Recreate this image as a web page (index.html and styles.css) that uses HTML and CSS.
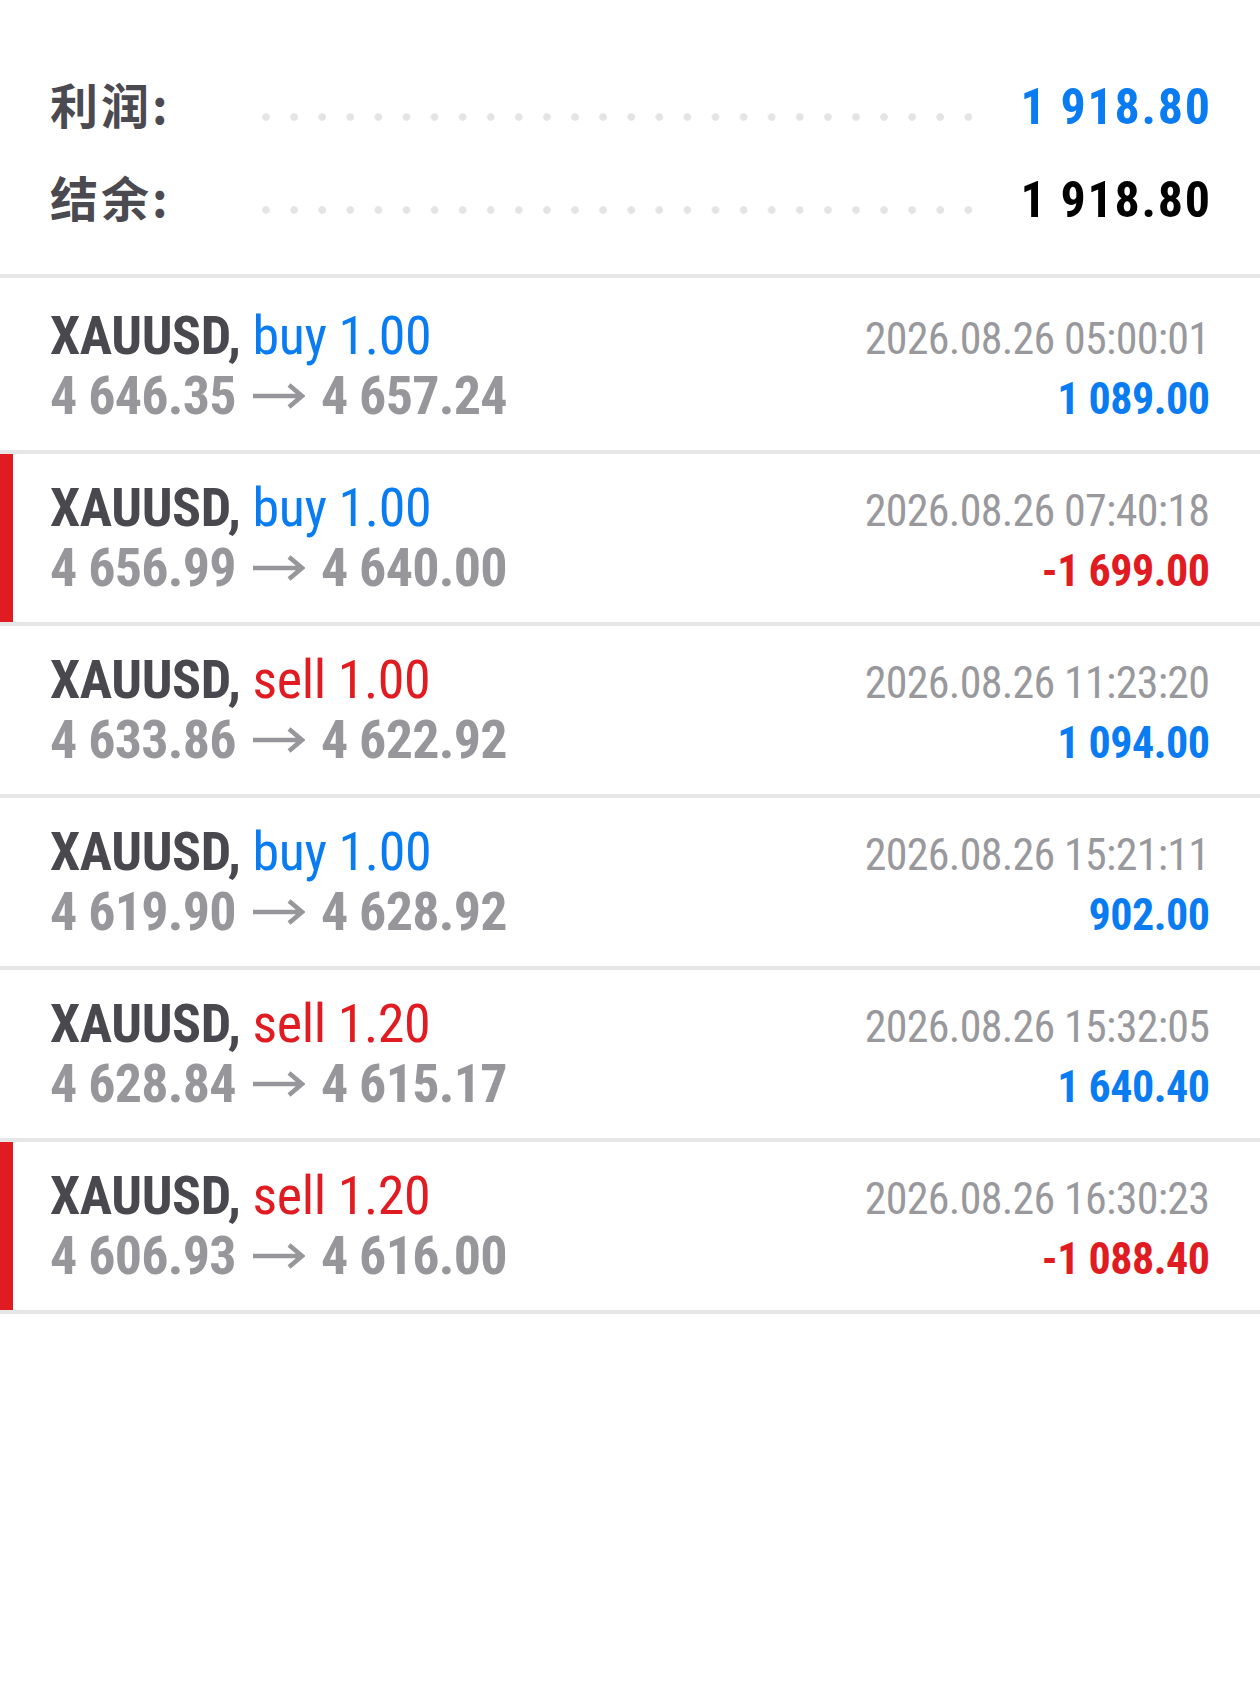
FILE: index.html
```html
<!DOCTYPE html>
<html lang="zh">
<head>
<meta charset="utf-8">
<title>历史</title>
<link rel="stylesheet" href="styles.css">
</head>
<body>
<div class="summary">
  <div class="sum-row">
    <span class="sum-label">利润:</span>
    <span class="dots"></span>
    <span class="sum-value blue">1 918.80</span>
  </div>
  <div class="sum-row">
    <span class="sum-label">结余:</span>
    <span class="dots"></span>
    <span class="sum-value black">1 918.80</span>
  </div>
</div>

<div class="deals">
  <div class="deal">
    <div class="line">
      <span class="title"><b class="sym">XAUUSD,</b> <span class="blue">buy 1.00</span></span>
      <span class="time">2026.08.26 05:00:01</span>
    </div>
    <div class="line">
      <span class="prices">4 646.35<svg class="arrow" viewBox="0 0 52 26"><path d="M0 13H48M36 2L49 13L36 24"/></svg>4 657.24</span>
      <span class="profit blue">1 089.00</span>
    </div>
  </div>
  <div class="deal loss">
    <div class="line">
      <span class="title"><b class="sym">XAUUSD,</b> <span class="blue">buy 1.00</span></span>
      <span class="time">2026.08.26 07:40:18</span>
    </div>
    <div class="line">
      <span class="prices">4 656.99<svg class="arrow" viewBox="0 0 52 26"><path d="M0 13H48M36 2L49 13L36 24"/></svg>4 640.00</span>
      <span class="profit red">-1 699.00</span>
    </div>
  </div>
  <div class="deal">
    <div class="line">
      <span class="title"><b class="sym">XAUUSD,</b> <span class="red">sell 1.00</span></span>
      <span class="time">2026.08.26 11:23:20</span>
    </div>
    <div class="line">
      <span class="prices">4 633.86<svg class="arrow" viewBox="0 0 52 26"><path d="M0 13H48M36 2L49 13L36 24"/></svg>4 622.92</span>
      <span class="profit blue">1 094.00</span>
    </div>
  </div>
  <div class="deal">
    <div class="line">
      <span class="title"><b class="sym">XAUUSD,</b> <span class="blue">buy 1.00</span></span>
      <span class="time">2026.08.26 15:21:11</span>
    </div>
    <div class="line">
      <span class="prices">4 619.90<svg class="arrow" viewBox="0 0 52 26"><path d="M0 13H48M36 2L49 13L36 24"/></svg>4 628.92</span>
      <span class="profit blue">902.00</span>
    </div>
  </div>
  <div class="deal">
    <div class="line">
      <span class="title"><b class="sym">XAUUSD,</b> <span class="red">sell 1.20</span></span>
      <span class="time">2026.08.26 15:32:05</span>
    </div>
    <div class="line">
      <span class="prices">4 628.84<svg class="arrow" viewBox="0 0 52 26"><path d="M0 13H48M36 2L49 13L36 24"/></svg>4 615.17</span>
      <span class="profit blue">1 640.40</span>
    </div>
  </div>
  <div class="deal loss">
    <div class="line">
      <span class="title"><b class="sym">XAUUSD,</b> <span class="red">sell 1.20</span></span>
      <span class="time">2026.08.26 16:30:23</span>
    </div>
    <div class="line">
      <span class="prices">4 606.93<svg class="arrow" viewBox="0 0 52 26"><path d="M0 13H48M36 2L49 13L36 24"/></svg>4 616.00</span>
      <span class="profit red">-1 088.40</span>
    </div>
  </div>
</div>
</body>
</html>
```
FILE: styles.css
```css
html, body {
  margin: 0;
  padding: 0;
  background: #ffffff;
}
body {
  font-family: "Roboto Condensed", Roboto, "Noto Sans CJK SC", sans-serif;
  color: #48484e;
}

.blue { color: #0a7cf2; }
.red { color: #e01b21; }
.black { color: #000000; }

/* summary */
.summary {
  padding: 79px 50px 9px 50px;
  border-bottom: 4px solid #e6e6e6;
}
.sum-row {
  display: flex;
  align-items: baseline;
  height: 93px;
}
.sum-label {
  font-family: "Noto Sans CJK SC", sans-serif;
  font-weight: 700;
  font-size: 48px;
  letter-spacing: 3px;
  line-height: 1;
  color: #4a4a50;
  width: 212px;
  flex: none;
}
.dots {
  flex: 1;
  align-self: flex-start;
  margin-top: 34px;
  margin-right: 46px;
  height: 8px;
  background-image: radial-gradient(circle at 4px 4px, #e4e4e4 3.4px, rgba(228,228,228,0) 4.2px);
  background-size: 28.1px 8px;
  background-repeat: repeat-x;
}
.sum-value {
  font-weight: 700;
  font-size: 50px;
  letter-spacing: 1.7px;
  margin-right: -1.7px;
  line-height: 1;
  flex: none;
}

/* deals */
.deals {
  padding-top: 4px;
}
.deal {
  padding: 24px 50px 24px 50px;
  border-bottom: 4px solid #e6e6e6;
}
.deal.loss {
  box-shadow: inset 13px 0 0 #e01b21;
}
.line {
  display: flex;
  justify-content: space-between;
  align-items: baseline;
  height: 60px;
  line-height: 60px;
  white-space: nowrap;
}
.title {
  font-size: 54px;
  letter-spacing: -0.4px;
  font-weight: 400;
}
.sym {
  font-weight: 700;
  color: #48484e;
}
.prices {
  font-size: 54px;
  letter-spacing: -0.75px;
  font-weight: 700;
  color: #97979b;
}
.arrow {
  width: 52px;
  height: 26px;
  margin: 0 16px 0 17px;
  vertical-align: 5px;
  fill: none;
  stroke: #97979b;
  stroke-width: 4.5;
}
.time {
  font-size: 44px;
  letter-spacing: -0.7px;
  margin-right: 0.7px;
  font-weight: 400;
  color: #99999d;
}
.profit {
  font-size: 44px;
  letter-spacing: -0.5px;
  margin-right: 0.5px;
  font-weight: 700;
}
```
